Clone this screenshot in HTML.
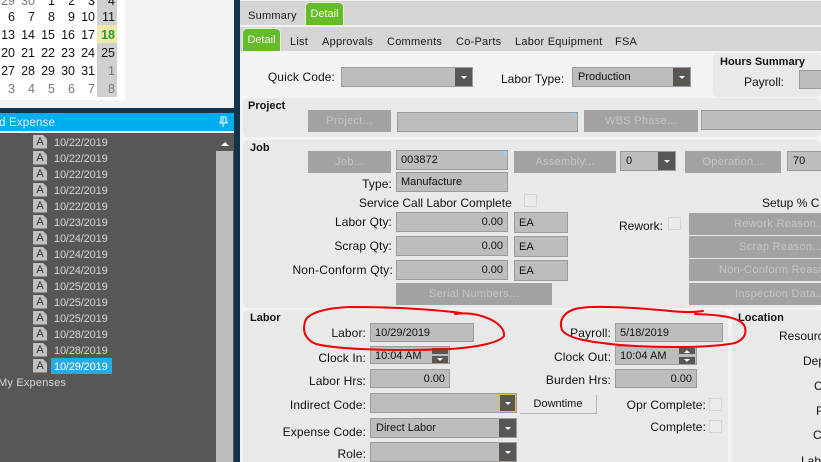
<!DOCTYPE html>
<html><head><meta charset="utf-8">
<style>
html,body{margin:0;padding:0;width:821px;height:462px;overflow:hidden}
#w{position:absolute;left:0;top:0;width:821px;height:462px;overflow:hidden;background:#f3f3f6;font-family:"Liberation Sans",sans-serif;font-size:12px;color:#111}
.a{position:absolute}
.t{position:absolute;white-space:nowrap;line-height:14px;height:14px;margin-top:0}
.r{position:absolute;white-space:nowrap;line-height:14px;height:14px;text-align:right;letter-spacing:.1px}
.d{position:absolute;width:20px;text-align:right;font-size:12.5px;line-height:18px;color:#111;margin-top:1px}
.g{color:#777}
.ld{position:absolute;left:54px;font-size:11px;line-height:16px;color:#d6d6d6;white-space:nowrap;letter-spacing:-.15px;margin-top:1px}
.ic{position:absolute;left:33px;width:14px;height:14px;background:#c0c0c0;border-bottom:1px solid #8a8a8a;box-sizing:border-box;font-size:11px;line-height:15px;text-align:center;color:#333}
.ic:after{content:"";position:absolute;right:0;top:0;border-style:solid;border-width:0 4px 4px 0;border-color:transparent #595653 transparent transparent}
.tab{position:absolute;font-size:11px;line-height:14px;color:#1a1a1a;white-space:nowrap;letter-spacing:.25px;margin-top:1px}
.gt{position:absolute;background:#66bb2a;border:1px solid #e4f3d8;border-bottom:0;border-radius:5px 5px 0 0;color:#f2f2f2;font-size:11px;text-align:center;box-sizing:border-box}
.p{position:absolute;background:#e9e9e9;border-radius:5px}
.f{position:absolute;background:#bdbdbd;border:1px solid #9b9b9b;box-sizing:border-box;font-size:11px;line-height:15px;padding:0 4px;color:#111;white-space:nowrap}
.b{position:absolute;background:#a2a2a2;color:#c6c6c6;font-size:11px;text-align:center;white-space:nowrap;overflow:hidden;letter-spacing:.3px}
.dd{position:absolute;right:0;top:0;bottom:0;width:17px;background:#595653}
.dd:after,.sp:after{content:"";position:absolute;left:50%;top:50%;margin:-1.5px 0 0 -3px;border-style:solid;border-width:3px 3px 0 3px;border-color:#fff transparent transparent}
.sp{position:absolute;background:#595653;width:16px;height:6px}
.sp.u:after{border-width:0 3px 3px 3px;border-color:transparent transparent #fff}
.sp.n:after{display:none}
.cb{position:absolute;width:11px;height:11px;border:1px solid #d4d4d4;background:#ebebeb}
.tc{position:absolute;width:7px;height:7px;right:0;top:0;background:linear-gradient(45deg,transparent 50%,#a9c4e4 50%)}
.h{position:absolute;font-weight:bold;font-size:11px;line-height:13px;white-space:nowrap;color:#111;margin-top:1px}
</style></head><body><div id="w">

<!-- Left upper -->
<div class="a" style="left:0;top:0;width:234px;height:108px;background:#f2f2f5"></div>
<div class="a" style="left:0;top:0;width:125px;height:100px;background:#fff"></div>
<div class="a" style="left:97px;top:0;width:20px;height:97px;background:#d0d0d0"></div>
<div class="a" style="left:97px;top:25px;width:20px;height:18px;background:#eee8aa"></div>

<div class="d g" style="left:-5px;top:-9px">29</div><div class="d g" style="left:15px;top:-9px">30</div><div class="d" style="left:35px;top:-9px">1</div><div class="d" style="left:55px;top:-9px">2</div><div class="d" style="left:75px;top:-9px">3</div><div class="d" style="left:95px;top:-9px">4</div>
<div class="d" style="left:-5px;top:7px">6</div><div class="d" style="left:15px;top:7px">7</div><div class="d" style="left:35px;top:7px">8</div><div class="d" style="left:55px;top:7px">9</div><div class="d" style="left:75px;top:7px">10</div><div class="d" style="left:95px;top:7px">11</div>
<div class="d" style="left:-5px;top:25px">13</div><div class="d" style="left:15px;top:25px">14</div><div class="d" style="left:35px;top:25px">15</div><div class="d" style="left:55px;top:25px">16</div><div class="d" style="left:75px;top:25px">17</div><div class="d" style="left:95px;top:25px;color:#2a9a3a;font-weight:bold">18</div>
<div class="d" style="left:-5px;top:43px">20</div><div class="d" style="left:15px;top:43px">21</div><div class="d" style="left:35px;top:43px">22</div><div class="d" style="left:55px;top:43px">23</div><div class="d" style="left:75px;top:43px">24</div><div class="d" style="left:95px;top:43px">25</div>
<div class="d" style="left:-5px;top:61px">27</div><div class="d" style="left:15px;top:61px">28</div><div class="d" style="left:35px;top:61px">29</div><div class="d" style="left:55px;top:61px">30</div><div class="d" style="left:75px;top:61px">31</div><div class="d g" style="left:95px;top:61px">1</div>
<div class="d g" style="left:-5px;top:79px">3</div><div class="d g" style="left:15px;top:79px">4</div><div class="d g" style="left:35px;top:79px">5</div><div class="d g" style="left:55px;top:79px">6</div><div class="d g" style="left:75px;top:79px">7</div><div class="d g" style="left:95px;top:79px">8</div>

<!-- Dark frame -->
<div class="a" style="left:0;top:108px;width:240px;height:5px;background:#12344d"></div>
<div class="a" style="left:234px;top:0;width:6px;height:462px;background:#12344d"></div>

<!-- Blue header -->
<div class="a" style="left:0;top:113px;width:234px;height:18px;background:#00adef"></div>
<div class="t" style="left:-1px;top:116px;color:#eaf6fd;font-size:11.5px;letter-spacing:.2px">d Expense</div>
<svg class="a" style="left:219px;top:116px" width="9" height="12" viewBox="0 0 9 12"><path d="M2 1H7V6H8V7H1V6H2ZM4 2V6M4 7V11" stroke="#fff" fill="none" stroke-width="1"/></svg>
<div class="a" style="left:0;top:131px;width:234px;height:2px;background:#e9e9e9"></div>

<!-- List -->
<div class="a" style="left:0;top:133px;width:234px;height:329px;background:#595653"></div>
<div class="a" style="left:216px;top:151px;width:17px;height:311px;background:#bdbdbd"></div>
<div class="a" style="left:221px;top:142px;border-style:solid;border-width:0 4px 4px 4px;border-color:transparent transparent #fff"></div>

<div class="ic" style="top:135px">A</div><div class="ld" style="top:134px">10/22/2019</div>
<div class="ic" style="top:151px">A</div><div class="ld" style="top:150px">10/22/2019</div>
<div class="ic" style="top:167px">A</div><div class="ld" style="top:166px">10/22/2019</div>
<div class="ic" style="top:183px">A</div><div class="ld" style="top:182px">10/22/2019</div>
<div class="ic" style="top:199px">A</div><div class="ld" style="top:198px">10/22/2019</div>
<div class="ic" style="top:215px">A</div><div class="ld" style="top:214px">10/23/2019</div>
<div class="ic" style="top:231px">A</div><div class="ld" style="top:230px">10/24/2019</div>
<div class="ic" style="top:247px">A</div><div class="ld" style="top:246px">10/24/2019</div>
<div class="ic" style="top:263px">A</div><div class="ld" style="top:262px">10/24/2019</div>
<div class="ic" style="top:279px">A</div><div class="ld" style="top:278px">10/25/2019</div>
<div class="ic" style="top:295px">A</div><div class="ld" style="top:294px">10/25/2019</div>
<div class="ic" style="top:311px">A</div><div class="ld" style="top:310px">10/25/2019</div>
<div class="ic" style="top:327px">A</div><div class="ld" style="top:326px">10/28/2019</div>
<div class="ic" style="top:343px">A</div><div class="ld" style="top:342px">10/28/2019</div>
<div class="ic" style="top:359px">A</div>
<div class="a" style="left:51px;top:358px;width:61px;height:16px;background:#29abe2"></div>
<div class="ld" style="top:358px;color:#fff">10/29/2019</div>
<div class="ld" style="left:-2px;top:374px;letter-spacing:.2px">My Expenses</div>

<!-- Main top tabs -->
<div class="a" style="left:240px;top:1px;width:581px;height:24px;background:#d5d5d5"></div>
<div class="a" style="left:240px;top:25px;width:581px;height:2px;background:#f3f3f6"></div>
<div class="a" style="left:240px;top:27px;width:581px;height:24px;background:#d5d5d5"></div>
<div class="tab" style="left:248px;top:8px">Summary</div>
<div class="gt" style="left:305px;top:2px;width:39px;height:23px;line-height:23px">Detail</div>
<div class="gt" style="left:242px;top:28px;width:39px;height:23px;line-height:22px">Detail</div>
<div class="tab" style="left:290px;top:34px">List</div>
<div class="tab" style="left:322px;top:34px">Approvals</div>
<div class="tab" style="left:387px;top:34px">Comments</div>
<div class="tab" style="left:456px;top:34px">Co-Parts</div>
<div class="tab" style="left:515px;top:34px">Labor Equipment</div>
<div class="tab" style="left:615px;top:34px">FSA</div>

<!-- Quick code row -->
<div class="r" style="left:250px;width:85px;top:70px">Quick Code:</div>
<div class="f" style="left:341px;top:67px;width:132px;height:20px"><div class="dd"></div></div>
<div class="t" style="left:501px;top:72px">Labor Type:</div>
<div class="f" style="left:572px;top:67px;width:119px;height:20px;padding-left:5px;line-height:19px">Production<div class="dd"></div></div>

<!-- Hours Summary -->
<div class="p" style="left:713px;top:53px;width:108px;height:44px"></div>
<div class="h" style="left:720px;top:55px">Hours Summary</div>
<div class="t" style="left:744px;top:75px">Payroll:</div>
<div class="f" style="left:799px;top:70px;width:30px;height:19px"></div>

<!-- Project -->
<div class="p" style="left:243px;top:98px;width:578px;height:39px"></div>
<div class="h" style="left:248px;top:99px">Project</div>
<div class="b" style="left:308px;top:110px;width:83px;height:22px;line-height:23px">Project...</div>
<div class="f" style="left:397px;top:112px;width:181px;height:20px"><div class="tc"></div></div>
<div class="b" style="left:584px;top:110px;width:114px;height:22px;line-height:23px">WBS Phase...</div>
<div class="f" style="left:701px;top:110px;width:130px;height:20px"></div>

<!-- Job -->
<div class="p" style="left:243px;top:140px;width:578px;height:168px"></div>
<div class="h" style="left:250px;top:141px">Job</div>
<div class="b" style="left:308px;top:151px;width:83px;height:22px;line-height:23px">Job...</div>
<div class="f" style="left:396px;top:150px;width:112px;height:20px;line-height:19px;padding-left:4px">003872<div class="tc"></div></div>
<div class="b" style="left:514px;top:151px;width:102px;height:22px;line-height:23px">Assembly...</div>
<div class="f" style="left:620px;top:151px;width:56px;height:20px;line-height:19px;padding-left:5px">0<div class="dd"></div></div>
<div class="b" style="left:685px;top:151px;width:96px;height:22px;line-height:23px">Operation...</div>
<div class="f" style="left:787px;top:151px;width:50px;height:20px;line-height:19px;padding-left:5px">70</div>

<div class="r" style="left:340px;width:52px;top:177px">Type:</div>
<div class="f" style="left:396px;top:172px;width:112px;height:20px;line-height:19px">Manufacture</div>
<div class="t" style="left:359px;top:196px">Service Call Labor Complete</div>
<div class="cb" style="left:524px;top:194px"></div>
<div class="t" style="left:762px;top:196px">Setup % C</div>

<div class="r" style="left:280px;width:112px;top:215px">Labor Qty:</div>
<div class="f" style="left:396px;top:212px;width:112px;height:20px;line-height:19px;text-align:right">0.00</div>
<div class="f" style="left:514px;top:212px;width:54px;height:21px;line-height:20px">EA</div>
<div class="r" style="left:280px;width:112px;top:239px">Scrap Qty:</div>
<div class="f" style="left:396px;top:236px;width:112px;height:20px;line-height:19px;text-align:right">0.00</div>
<div class="f" style="left:514px;top:236px;width:54px;height:21px;line-height:20px">EA</div>
<div class="r" style="left:280px;width:113px;top:263px;letter-spacing:.2px">Non-Conform Qty:</div>
<div class="f" style="left:396px;top:260px;width:112px;height:20px;line-height:19px;text-align:right">0.00</div>
<div class="f" style="left:514px;top:260px;width:54px;height:21px;line-height:20px">EA</div>
<div class="t" style="left:619px;top:219px">Rework:</div>
<div class="cb" style="left:668px;top:217px"></div>

<div class="b" style="left:689px;top:213px;width:150px;height:22px;line-height:22px;text-align:left;text-indent:45px">Rework Reason...</div>
<div class="b" style="left:689px;top:236px;width:150px;height:22px;line-height:22px;text-align:left;text-indent:50px">Scrap Reason...</div>
<div class="b" style="left:689px;top:259px;width:150px;height:22px;line-height:22px;text-align:left;text-indent:30px">Non-Conform Reason...</div>
<div class="b" style="left:689px;top:283px;width:150px;height:22px;line-height:22px;text-align:left;text-indent:46px">Inspection Data...</div>
<div class="b" style="left:396px;top:283px;width:156px;height:22px;line-height:22px">Serial Numbers...</div>

<!-- Labor -->
<div class="p" style="left:243px;top:310px;width:485px;height:152px;border-radius:5px 5px 0 0"></div>
<div class="h" style="left:250px;top:311px">Labor</div>
<div class="r" style="left:300px;width:66px;top:326px">Labor:</div>
<div class="f" style="left:370px;top:323px;width:104px;height:19px;line-height:18px">10/29/2019</div>
<div class="r" style="left:300px;width:66px;top:351px">Clock In:</div>
<div class="f" style="left:370px;top:346px;width:80px;height:18px;line-height:18px">10:04 AM
<div class="sp n" style="right:1px;top:1px"></div><div class="sp" style="right:1px;top:9px;height:7px"></div></div>
<div class="r" style="left:290px;width:76px;top:374px">Labor Hrs:</div>
<div class="f" style="left:370px;top:369px;width:80px;height:19px;line-height:18px;text-align:right">0.00</div>
<div class="r" style="left:280px;width:86px;top:398px">Indirect Code:</div>
<div class="f" style="left:370px;top:393px;width:147px;height:20px"><div class="dd" style="border:1px solid #e3c04a;box-sizing:border-box"></div></div>
<div class="a" style="left:520px;top:395px;width:77px;height:19px;border:solid #b5b5b5;border-width:0 1px 1px 0;box-sizing:border-box;font-size:11px;line-height:18px;text-align:center">Downtime</div>
<div class="r" style="left:270px;width:96px;top:425px">Expense Code:</div>
<div class="f" style="left:370px;top:418px;width:147px;height:20px;line-height:18px;padding-left:5px">Direct Labor<div class="dd"></div></div>
<div class="r" style="left:290px;width:76px;top:447px">Role:</div>
<div class="f" style="left:370px;top:442px;width:147px;height:20px"><div class="dd"></div></div>

<div class="r" style="left:540px;width:71px;top:326px">Payroll:</div>
<div class="f" style="left:615px;top:323px;width:108px;height:19px;line-height:18px">5/18/2019</div>
<div class="r" style="left:540px;width:71px;top:350px">Clock Out:</div>
<div class="f" style="left:615px;top:346px;width:82px;height:19px;line-height:18px">10:04 AM
<div class="sp u" style="right:1px;top:1px"></div><div class="sp" style="right:1px;top:10px;height:7px"></div></div>
<div class="r" style="left:530px;width:81px;top:373px">Burden Hrs:</div>
<div class="f" style="left:615px;top:369px;width:82px;height:19px;line-height:18px;text-align:right">0.00</div>
<div class="r" style="left:610px;width:96px;top:398px">Opr Complete:</div>
<div class="cb" style="left:709px;top:398px"></div>
<div class="r" style="left:610px;width:96px;top:420px">Complete:</div>
<div class="cb" style="left:709px;top:420px"></div>

<!-- Location -->
<div class="p" style="left:732px;top:310px;width:100px;height:152px;border-radius:5px 0 0 0"></div>
<div class="h" style="left:738px;top:311px">Location</div>
<div class="t" style="left:779px;top:329px">Resourc</div>
<div class="t" style="left:803px;top:354px">Dep</div>
<div class="t" style="left:814px;top:379px">C</div>
<div class="t" style="left:816px;top:404px">F</div>
<div class="t" style="left:813px;top:428px">C</div>
<div class="t" style="left:801px;top:454px">Lab</div>

<!-- Red annotations -->
<svg class="a" style="left:0;top:0" width="821" height="462" viewBox="0 0 821 462">
<g fill="none" stroke="#f00000" stroke-width="2" stroke-linecap="round" stroke-linejoin="round">
<path d="M461 313C430 309 395 307 350 307C325 308 307 313 305 322C302 332 306 340 316 344C340 350 400 351 450 349C480 347 500 342 504 336C505 327 494 319 478 315C470 313 462 313 455 314"/>
<path d="M703 311C690 313 680 312 660 310C625 307 590 305 575 309C562 313 559 322 562 330C568 339 590 342 620 345C660 348 710 348 735 343C746 339 747 331 744 325C739 318 725 315 695 314"/>
</g></svg>
</div></body></html>
